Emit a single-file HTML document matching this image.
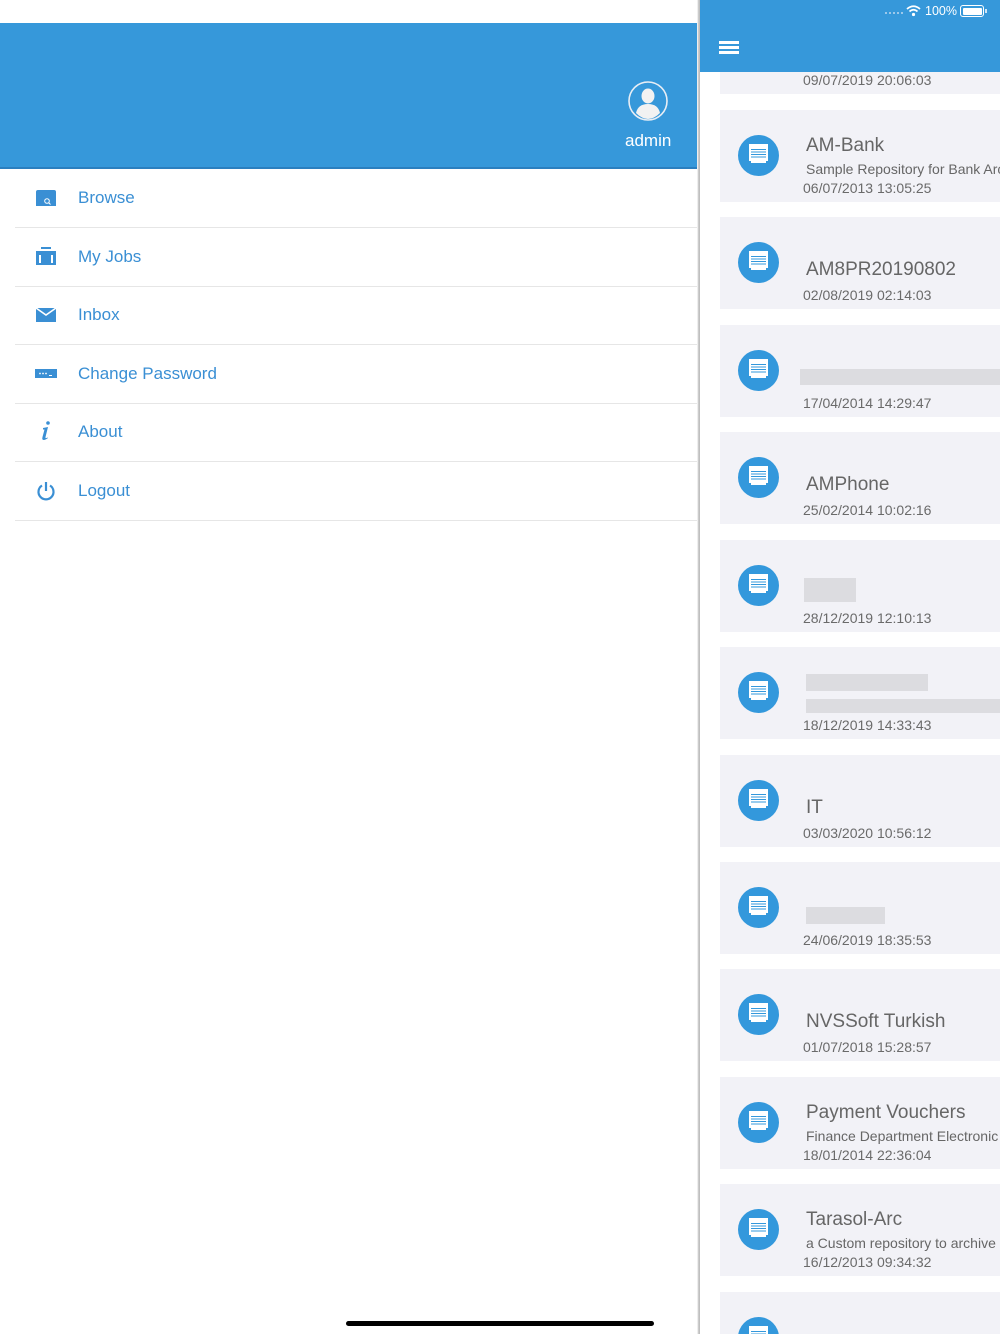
<!DOCTYPE html>
<html style="overflow:hidden;height:1334px"><head><meta charset="utf-8"><style>
*{margin:0;padding:0;box-sizing:border-box}
html,body{width:1000px;height:1334px;overflow:hidden}
body{position:relative;background:#fff;font-family:"Liberation Sans",sans-serif}
.abs{position:absolute}
.menu{position:absolute;left:15px;width:685px;height:58px;border-bottom:1.5px solid #e6e6e6}
.menu span{position:absolute;left:63px;top:18px;font-size:17px;color:#3a8fd4}
.menu svg{position:absolute;left:20px;top:18px}
.card{position:absolute;left:720px;width:280px;height:92px;background:#f2f2f7;overflow:hidden}
.card .ic{position:absolute;left:18px;top:25px;width:41px;height:41px;border-radius:50%;background:#3398dc;overflow:hidden}
.card .ic::after{content:"";position:absolute;left:11px;top:9px;width:19px;height:17px;background:#fff;}
.card .ic::before{content:"";position:absolute;left:13px;top:14px;width:15px;height:9px;z-index:1;background:repeating-linear-gradient(#3398dc 0 1px,transparent 1px 2.5px);}
.card .ic i{position:absolute;left:13px;top:26px;width:15px;height:2px;background:#fff;z-index:2}
.card .t{position:absolute;left:86px;font-size:19px;color:#666;white-space:nowrap}
.card .s{position:absolute;left:86px;top:51px;font-size:14px;color:#666;white-space:nowrap}
.card .d{position:absolute;left:83px;top:70px;font-size:14px;color:#6a6a6a;white-space:nowrap}
.blur{position:absolute;background:#dcdce0}
</style></head><body>
<div class="abs" style="left:0;top:23px;width:700px;height:146px;background:#3698da;border-bottom:2px solid #2b7fbf"></div>
<svg class="abs" style="left:628px;top:81px" width="40" height="40" viewBox="0 0 40 40"><circle cx="20" cy="20" r="19" fill="none" stroke="#e8eef5" stroke-width="1.6"/><ellipse cx="20" cy="15" rx="6.5" ry="7.5" fill="#f2f2f2"/><path d="M8 32 Q10 23 20 23 Q30 23 32 32 Q26 38 20 38 Q14 38 8 32Z" fill="#f2f2f2"/></svg>
<div class="abs" style="left:625px;top:131px;font-size:17px;color:#fff">admin</div>

<div class="menu" style="top:170px"><svg width="22" height="18" viewBox="0 0 22 18"><path d="M1 5 L1 4 Q1 2 3 2 L19 2 Q21 2 21 4 L21 18 L1 18Z" fill="#3a8fd4"/><circle cx="12" cy="13" r="2.3" fill="none" stroke="#fff" stroke-width="1"/><line x1="13.6" y1="14.6" x2="15.5" y2="16.5" stroke="#fff"/></svg><span>Browse</span></div>
<div class="menu" style="top:229px"><svg width="22" height="18" viewBox="0 0 22 18"><rect x="6" y="0" width="10" height="2" fill="#3a8fd4"/><rect x="1" y="4" width="20" height="14" fill="#3a8fd4"/><rect x="4" y="8" width="2" height="8" fill="#fff"/><rect x="16" y="8" width="2" height="8" fill="#fff"/></svg><span>My Jobs</span></div>
<div class="menu" style="top:287px"><svg width="22" height="18" viewBox="0 0 22 18"><rect x="1" y="3" width="20" height="14" fill="#3a8fd4"/><path d="M1 3 L11 10 L21 3" fill="none" stroke="#fff" stroke-width="1.6"/></svg><span>Inbox</span></div>
<div class="menu" style="top:346px"><svg width="22" height="18" viewBox="0 0 22 18"><rect x="0" y="5" width="22" height="9" fill="#3a8fd4"/><circle cx="5" cy="9.5" r="0.9" fill="#fff"/><circle cx="8" cy="9.5" r="0.9" fill="#fff"/><circle cx="11" cy="9.5" r="0.9" fill="#fff"/><rect x="14" y="11" width="3" height="1" fill="#fff"/></svg><span>Change Password</span></div>
<div class="menu" style="top:404px"><svg width="22" height="22" viewBox="0 0 22 22" style="top:16px"><circle cx="13" cy="3" r="1.8" fill="#3a8fd4"/><path d="M8 8 L13 7 L10.5 17 Q10 19 12.5 17.5 L13 18 Q9 21 7.5 19.5 Q7 18.5 7.5 17 L9.5 9.5 L8 9.5Z" fill="#3a8fd4"/></svg><span>About</span></div>
<div class="menu" style="top:463px"><svg width="22" height="22" viewBox="0 0 22 22" style="top:17px"><path d="M7 5.5 A7.5 7.5 0 1 0 15 5.5" fill="none" stroke="#3a8fd4" stroke-width="2.2"/><line x1="11" y1="2" x2="11" y2="11" stroke="#3a8fd4" stroke-width="2.2"/></svg><span>Logout</span></div>

<div class="abs" style="left:697px;top:0;width:4px;height:1334px;background:linear-gradient(to right,#fff,#bbb,#ccc)"></div>
<div class="abs" style="left:700px;top:0;width:300px;height:1334px;background:#fff"></div>

<div class="card" style="top:72px;height:22px"><div class="d" style="top:0">09/07/2019 20:06:03</div></div>
<div class="card" style="top:110px"><div class="ic"><i></i></div><div class="t" style="top:25px">AM-Bank</div><div class="s">Sample Repository for Bank Archive</div><div class="d">06/07/2013 13:05:25</div></div>
<div class="card" style="top:217px"><div class="ic"><i></i></div><div class="t" style="top:42px">AM8PR20190802</div><div class="d">02/08/2019 02:14:03</div></div>
<div class="card" style="top:325px"><div class="ic"><i></i></div><div class="blur" style="left:80px;top:44px;width:200px;height:16px"></div><div class="d">17/04/2014 14:29:47</div></div>
<div class="card" style="top:432px"><div class="ic"><i></i></div><div class="t" style="top:42px">AMPhone</div><div class="d">25/02/2014 10:02:16</div></div>
<div class="card" style="top:540px"><div class="ic"><i></i></div><div class="blur" style="left:84px;top:38px;width:52px;height:24px"></div><div class="d">28/12/2019 12:10:13</div></div>
<div class="card" style="top:647px"><div class="ic"><i></i></div><div class="blur" style="left:86px;top:27px;width:122px;height:17px"></div><div class="blur" style="left:86px;top:52px;width:194px;height:14px"></div><div class="d">18/12/2019 14:33:43</div></div>
<div class="card" style="top:755px"><div class="ic"><i></i></div><div class="t" style="top:42px">IT</div><div class="d">03/03/2020 10:56:12</div></div>
<div class="card" style="top:862px"><div class="ic"><i></i></div><div class="blur" style="left:86px;top:45px;width:79px;height:17px"></div><div class="d">24/06/2019 18:35:53</div></div>
<div class="card" style="top:969px"><div class="ic"><i></i></div><div class="t" style="top:42px">NVSSoft Turkish</div><div class="d">01/07/2018 15:28:57</div></div>
<div class="card" style="top:1077px"><div class="ic"><i></i></div><div class="t" style="top:25px">Payment Vouchers</div><div class="s">Finance Department Electronic</div><div class="d">18/01/2014 22:36:04</div></div>
<div class="card" style="top:1184px"><div class="ic"><i></i></div><div class="t" style="top:25px">Tarasol-Arc</div><div class="s">a Custom repository to archive</div><div class="d">16/12/2013 09:34:32</div></div>
<div class="card" style="top:1292px;height:42px"><div class="ic"><i></i></div></div>

<div class="abs" style="left:700px;top:0;width:300px;height:72px;background:#3698da"></div>
<div class="abs" style="left:719px;top:41px;width:20px;height:3px;background:#fff;box-shadow:0 5px 0 #fff,0 10px 0 #fff"></div>
<div class="abs" style="left:885px;top:12px;width:18px;height:2px;border-top:2px dotted #9cc8ea"></div>
<svg class="abs" style="left:906px;top:5px" width="15" height="12" viewBox="0 0 15 12"><path d="M1 4 Q7.5 -1.5 14 4" fill="none" stroke="#fff" stroke-width="1.8"/><path d="M3.5 6.5 Q7.5 3 11.5 6.5" fill="none" stroke="#fff" stroke-width="1.8"/><circle cx="7.5" cy="9.5" r="1.6" fill="#fff"/></svg>
<div class="abs" style="left:925px;top:4px;font-size:12.5px;color:#fff">100%</div>
<div class="abs" style="left:960px;top:5px;width:24px;height:12px;border:1.2px solid #fff;border-radius:3px;padding:1.5px"><div style="width:100%;height:100%;background:#fff;border-radius:1px"></div></div>
<div class="abs" style="left:985px;top:9px;width:2px;height:4px;background:#cfe4f5"></div>

<div class="abs" style="left:346px;top:1321px;width:308px;height:5px;border-radius:3px;background:#000"></div>
</body></html>
